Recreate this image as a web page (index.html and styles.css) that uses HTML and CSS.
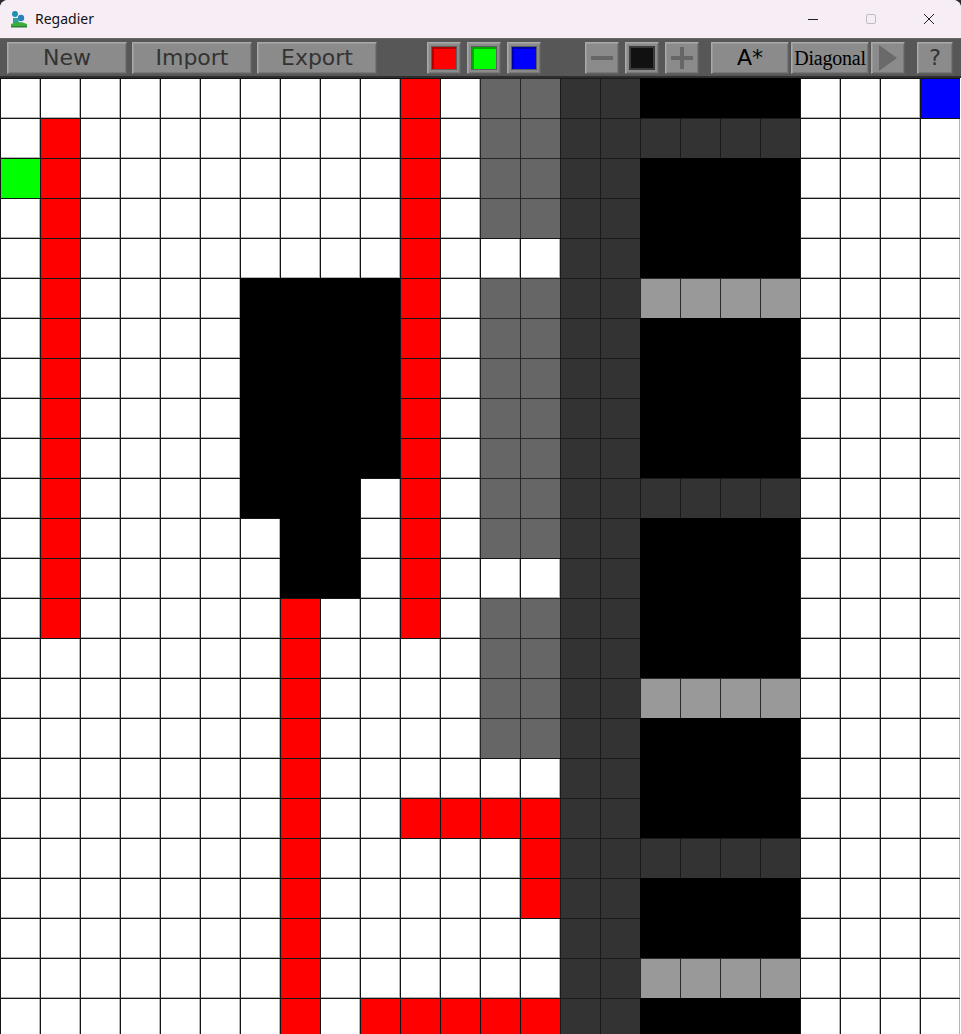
FILE: index.html
```html
<!DOCTYPE html>
<html>
<head>
<meta charset="utf-8">
<title>Regadier</title>
<link rel="stylesheet" href="styles.css">
</head>
<body>
<div class="window">
  <header class="titlebar">
    <svg class="appicon" width="18" height="18" viewBox="0 0 18 18">
      <circle cx="5" cy="4" r="3" fill="#1f8fb0"/>
      <circle cx="11" cy="8" r="3.2" fill="#2a7fbf"/>
      <path d="M3 8 L8 8 L9 13 L3 13 Z" fill="#26a39a"/>
      <path d="M1 14 Q9 10 17 14 L17 17 L1 17 Z" fill="#3cae3c"/>
      <rect x="1" y="16" width="16" height="1.5" fill="#2e7d32"/>
    </svg>
    <span class="apptitle">Regadier</span>
    <div class="controls">
      <span class="ctl"><svg width="12" height="12" viewBox="0 0 12 12"><path d="M1 6.5 H11" stroke="#222" stroke-width="1"/></svg></span>
      <span class="ctl"><svg width="12" height="12" viewBox="0 0 12 12"><rect x="1.5" y="1.5" width="9" height="9" rx="1.5" fill="none" stroke="#c2bcc2" stroke-width="1"/></svg></span>
      <span class="ctl"><svg width="12" height="12" viewBox="0 0 12 12"><path d="M1 1 L11 11 M11 1 L1 11" stroke="#222" stroke-width="1"/></svg></span>
    </div>
  </header>

  <nav class="toolbar">
    <div class="group g-file">
      <button class="btn wide">New</button>
      <button class="btn wide">Import</button>
      <button class="btn wide">Export</button>
    </div>
    <div class="group g-colors">
      <button class="btn sq"><span class="swatch red"></span></button>
      <button class="btn sq"><span class="swatch green"></span></button>
      <button class="btn sq"><span class="swatch blue"></span></button>
    </div>
    <div class="group g-brush">
      <button class="btn sq"><svg width="22" height="6" viewBox="0 0 22 6"><rect x="0" y="1" width="22" height="4" fill="#666"/></svg></button>
      <button class="btn sq"><span class="swatch black"></span></button>
      <button class="btn sq"><svg width="22" height="22" viewBox="0 0 22 22"><rect x="0" y="9" width="22" height="4" fill="#666"/><rect x="9" y="0" width="4" height="22" fill="#666"/></svg></button>
    </div>
    <div class="group g-algo">
      <button class="btn mid astar">A*</button>
      <button class="btn mid diag">Diagonal</button>
      <button class="btn sq"><svg width="20" height="26" viewBox="0 0 20 26"><path d="M1 0 L19 13 L1 26 Z" fill="#6a6a6a"/></svg></button>
    </div>
    <div class="group g-help">
      <button class="btn help">?</button>
    </div>
  </nav>

  <main class="grid">
<i></i><i></i><i></i><i></i><i></i><i></i><i></i><i></i><i></i><i></i><i class="r"></i><i></i><i class="m"></i><i class="m"></i><i class="d"></i><i class="d"></i><i class="k"></i><i class="k"></i><i class="k"></i><i class="k"></i><i></i><i></i><i></i><i class="b"></i>
<i></i><i class="r"></i><i></i><i></i><i></i><i></i><i></i><i></i><i></i><i></i><i class="r"></i><i></i><i class="m"></i><i class="m"></i><i class="d"></i><i class="d"></i><i class="d"></i><i class="d"></i><i class="d"></i><i class="d"></i><i></i><i></i><i></i><i></i>
<i class="g"></i><i class="r"></i><i></i><i></i><i></i><i></i><i></i><i></i><i></i><i></i><i class="r"></i><i></i><i class="m"></i><i class="m"></i><i class="d"></i><i class="d"></i><i class="k"></i><i class="k"></i><i class="k"></i><i class="k"></i><i></i><i></i><i></i><i></i>
<i></i><i class="r"></i><i></i><i></i><i></i><i></i><i></i><i></i><i></i><i></i><i class="r"></i><i></i><i class="m"></i><i class="m"></i><i class="d"></i><i class="d"></i><i class="k"></i><i class="k"></i><i class="k"></i><i class="k"></i><i></i><i></i><i></i><i></i>
<i></i><i class="r"></i><i></i><i></i><i></i><i></i><i></i><i></i><i></i><i></i><i class="r"></i><i></i><i></i><i></i><i class="d"></i><i class="d"></i><i class="k"></i><i class="k"></i><i class="k"></i><i class="k"></i><i></i><i></i><i></i><i></i>
<i></i><i class="r"></i><i></i><i></i><i></i><i></i><i class="k"></i><i class="k"></i><i class="k"></i><i class="k"></i><i class="r"></i><i></i><i class="m"></i><i class="m"></i><i class="d"></i><i class="d"></i><i class="l"></i><i class="l"></i><i class="l"></i><i class="l"></i><i></i><i></i><i></i><i></i>
<i></i><i class="r"></i><i></i><i></i><i></i><i></i><i class="k"></i><i class="k"></i><i class="k"></i><i class="k"></i><i class="r"></i><i></i><i class="m"></i><i class="m"></i><i class="d"></i><i class="d"></i><i class="k"></i><i class="k"></i><i class="k"></i><i class="k"></i><i></i><i></i><i></i><i></i>
<i></i><i class="r"></i><i></i><i></i><i></i><i></i><i class="k"></i><i class="k"></i><i class="k"></i><i class="k"></i><i class="r"></i><i></i><i class="m"></i><i class="m"></i><i class="d"></i><i class="d"></i><i class="k"></i><i class="k"></i><i class="k"></i><i class="k"></i><i></i><i></i><i></i><i></i>
<i></i><i class="r"></i><i></i><i></i><i></i><i></i><i class="k"></i><i class="k"></i><i class="k"></i><i class="k"></i><i class="r"></i><i></i><i class="m"></i><i class="m"></i><i class="d"></i><i class="d"></i><i class="k"></i><i class="k"></i><i class="k"></i><i class="k"></i><i></i><i></i><i></i><i></i>
<i></i><i class="r"></i><i></i><i></i><i></i><i></i><i class="k"></i><i class="k"></i><i class="k"></i><i class="k"></i><i class="r"></i><i></i><i class="m"></i><i class="m"></i><i class="d"></i><i class="d"></i><i class="k"></i><i class="k"></i><i class="k"></i><i class="k"></i><i></i><i></i><i></i><i></i>
<i></i><i class="r"></i><i></i><i></i><i></i><i></i><i class="k"></i><i class="k"></i><i class="k"></i><i></i><i class="r"></i><i></i><i class="m"></i><i class="m"></i><i class="d"></i><i class="d"></i><i class="d"></i><i class="d"></i><i class="d"></i><i class="d"></i><i></i><i></i><i></i><i></i>
<i></i><i class="r"></i><i></i><i></i><i></i><i></i><i></i><i class="k"></i><i class="k"></i><i></i><i class="r"></i><i></i><i class="m"></i><i class="m"></i><i class="d"></i><i class="d"></i><i class="k"></i><i class="k"></i><i class="k"></i><i class="k"></i><i></i><i></i><i></i><i></i>
<i></i><i class="r"></i><i></i><i></i><i></i><i></i><i></i><i class="k"></i><i class="k"></i><i></i><i class="r"></i><i></i><i></i><i></i><i class="d"></i><i class="d"></i><i class="k"></i><i class="k"></i><i class="k"></i><i class="k"></i><i></i><i></i><i></i><i></i>
<i></i><i class="r"></i><i></i><i></i><i></i><i></i><i></i><i class="r"></i><i></i><i></i><i class="r"></i><i></i><i class="m"></i><i class="m"></i><i class="d"></i><i class="d"></i><i class="k"></i><i class="k"></i><i class="k"></i><i class="k"></i><i></i><i></i><i></i><i></i>
<i></i><i></i><i></i><i></i><i></i><i></i><i></i><i class="r"></i><i></i><i></i><i></i><i></i><i class="m"></i><i class="m"></i><i class="d"></i><i class="d"></i><i class="k"></i><i class="k"></i><i class="k"></i><i class="k"></i><i></i><i></i><i></i><i></i>
<i></i><i></i><i></i><i></i><i></i><i></i><i></i><i class="r"></i><i></i><i></i><i></i><i></i><i class="m"></i><i class="m"></i><i class="d"></i><i class="d"></i><i class="l"></i><i class="l"></i><i class="l"></i><i class="l"></i><i></i><i></i><i></i><i></i>
<i></i><i></i><i></i><i></i><i></i><i></i><i></i><i class="r"></i><i></i><i></i><i></i><i></i><i class="m"></i><i class="m"></i><i class="d"></i><i class="d"></i><i class="k"></i><i class="k"></i><i class="k"></i><i class="k"></i><i></i><i></i><i></i><i></i>
<i></i><i></i><i></i><i></i><i></i><i></i><i></i><i class="r"></i><i></i><i></i><i></i><i></i><i></i><i></i><i class="d"></i><i class="d"></i><i class="k"></i><i class="k"></i><i class="k"></i><i class="k"></i><i></i><i></i><i></i><i></i>
<i></i><i></i><i></i><i></i><i></i><i></i><i></i><i class="r"></i><i></i><i></i><i class="r"></i><i class="r"></i><i class="r"></i><i class="r"></i><i class="d"></i><i class="d"></i><i class="k"></i><i class="k"></i><i class="k"></i><i class="k"></i><i></i><i></i><i></i><i></i>
<i></i><i></i><i></i><i></i><i></i><i></i><i></i><i class="r"></i><i></i><i></i><i></i><i></i><i></i><i class="r"></i><i class="d"></i><i class="d"></i><i class="d"></i><i class="d"></i><i class="d"></i><i class="d"></i><i></i><i></i><i></i><i></i>
<i></i><i></i><i></i><i></i><i></i><i></i><i></i><i class="r"></i><i></i><i></i><i></i><i></i><i></i><i class="r"></i><i class="d"></i><i class="d"></i><i class="k"></i><i class="k"></i><i class="k"></i><i class="k"></i><i></i><i></i><i></i><i></i>
<i></i><i></i><i></i><i></i><i></i><i></i><i></i><i class="r"></i><i></i><i></i><i></i><i></i><i></i><i></i><i class="d"></i><i class="d"></i><i class="k"></i><i class="k"></i><i class="k"></i><i class="k"></i><i></i><i></i><i></i><i></i>
<i></i><i></i><i></i><i></i><i></i><i></i><i></i><i class="r"></i><i></i><i></i><i></i><i></i><i></i><i></i><i class="d"></i><i class="d"></i><i class="l"></i><i class="l"></i><i class="l"></i><i class="l"></i><i></i><i></i><i></i><i></i>
<i></i><i></i><i></i><i></i><i></i><i></i><i></i><i class="r"></i><i></i><i class="r"></i><i class="r"></i><i class="r"></i><i class="r"></i><i class="r"></i><i class="d"></i><i class="d"></i><i class="k"></i><i class="k"></i><i class="k"></i><i class="k"></i><i></i><i></i><i></i><i></i>
  </main>
</div>
</body>
</html>
```

FILE: styles.css
```css
html, body {
  margin: 0;
  padding: 0;
  background: #2b2b2b;
  overflow: hidden;
}

.window {
  width: 961px;
  height: 1034px;
  overflow: hidden;
  background: #fff;
  border-radius: 8px 8px 0 0;
}

.titlebar {
  height: 38px;
  background: #f7eef5;
  display: flex;
  align-items: center;
  font-family: "Noto Sans", "Open Sans", sans-serif;
  font-size: 14px;
  color: #111;
}

.appicon {
  margin-left: 10px;
  flex: none;
}

.apptitle {
  margin-left: 7px;
  margin-top: -1px;
}

.controls {
  margin-left: auto;
  margin-right: 3px;
  display: flex;
}

.ctl {
  width: 58px;
  height: 38px;
  display: flex;
  align-items: center;
  justify-content: center;
}

.toolbar {
  box-sizing: border-box;
  height: 40px;
  background: #575757;
  border-top: 1px solid #6a6a6a;
  border-bottom: 2px solid #2e2e2e;
  display: flex;
  align-items: flex-start;
  padding: 3px 0 0 7px;
}

.group {
  display: flex;
}

.g-file { gap: 5px; }
.g-colors { gap: 6px; margin-left: 50px; }
.g-brush { gap: 6px; margin-left: 44px; }
.g-algo { gap: 2px; margin-left: 12px; }
.g-help { margin-left: 12px; }

.btn {
  box-sizing: border-box;
  height: 32px;
  padding: 0;
  margin: 0;
  background: #8b8b8b;
  border: 1px solid;
  border-color: #a9a9a9 #616161 #616161 #a9a9a9;
  box-shadow: inset 1px 1px 0 #9a9a9a, inset -1px -1px 0 #777;
  display: flex;
  align-items: center;
  justify-content: center;
  font-family: "DejaVu Sans", "Liberation Sans", sans-serif;
  font-size: 22px;
  color: #333;
  line-height: 1;
}

.wide { width: 120px; }
.sq { width: 34px; }
.mid { width: 78px; }
.help { width: 36px; }

.astar { color: #000; }

.diag {
  font-family: "Liberation Serif", "DejaVu Serif", serif;
  font-size: 20px;
  color: #000;
  letter-spacing: -0.2px;
}

.swatch {
  box-sizing: border-box;
  width: 26px;
  height: 24px;
  display: block;
  border: 1px solid #5d5d5d;
}

.swatch.red { background: #ff0000; box-shadow: inset 2px 2px 0 #b00000; }
.swatch.green { background: #00ff00; box-shadow: inset 2px 2px 0 #00a800; }
.swatch.blue { background: #0000ff; box-shadow: inset 2px 2px 0 #0000a8; }
.swatch.black { background: #111; border: 2px solid #3a3a3a; }

.grid {
  display: grid;
  grid-template-columns: repeat(24, 40px);
  grid-auto-rows: 40px;
}

.grid i {
  box-sizing: border-box;
  display: block;
  background: #fff;
  border-left: 1px solid #141414;
  border-top: 1px solid #141414;
  box-shadow: inset -1px -1px 0 #b4b4b4;
}

.grid i.r { background: #ff0000; box-shadow: none; }
.grid i.g { background: #00ff00; box-shadow: none; }
.grid i.b { background: #0000ff; box-shadow: none; }
.grid i.k { background: #000; border-color: #000; box-shadow: none; }
.grid i.m { background: #666; border-color: #262626; box-shadow: none; }
.grid i.d { background: #333; border-color: #1a1a1a; box-shadow: none; }
.grid i.l { background: #999; border-color: #2a2a2a; box-shadow: none; }
```
